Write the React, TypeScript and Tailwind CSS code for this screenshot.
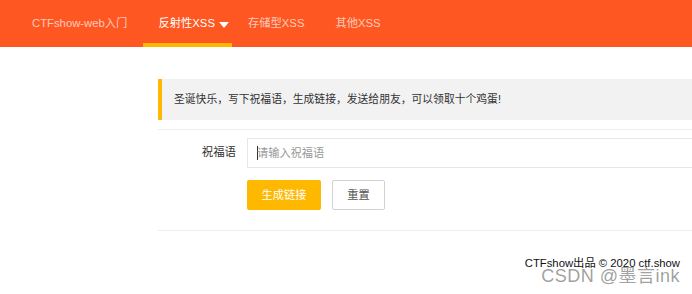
import React from "react";

export default function App() {
  const font = { fontFamily: '"Liberation Sans", Arial, "Noto Sans CJK SC", sans-serif' };
  return (
    <div className="relative w-[692px] h-[294px] overflow-hidden bg-white" style={font}>
      {/* Nav */}
      <div className="h-[47px] bg-[#FF5722] flex pl-[17px] gap-[1px]">
        <div className="relative px-[15px] h-full flex items-center text-[11.3px] text-white/70">CTFshow-web入门</div>
        <div className="relative pl-[15px] pr-[3px] h-full flex items-center text-[11.3px] text-white">
          反射性XSS
          <span className="ml-[4px] mt-[3px] w-0 h-0 border-l-[5px] border-r-[5px] border-t-[6px] border-l-transparent border-r-transparent border-t-white"></span>
          <span className="absolute left-0 right-0 bottom-0 h-[4px] bg-[#FFB800]"></span>
        </div>
        <div className="relative px-[15px] h-full flex items-center text-[11.3px] text-white/70">存储型XSS</div>
        <div className="relative px-[15px] h-full flex items-center text-[11.3px] text-white/70">其他XSS</div>
      </div>

      {/* Content */}
      <div className="ml-[158px] w-[600px] pt-[32px]">
        <div className="h-[41px] bg-[#f2f2f2] border-l-[4px] border-[#FFB800] flex items-center pl-[12px] text-[10.8px] text-[#333]">
          圣诞快乐，写下祝福语，生成链接，发送给朋友，可以领取十个鸡蛋!
        </div>
        <div className="mt-[9px] h-px bg-[#eeeeee]"></div>
        <div className="mt-[8px] flex items-center">
          <div className="w-[78px] text-right text-[11.4px] text-[#333]">祝福语</div>
          <div className="ml-[11px] flex-1 h-[30px] border border-[#e6e6e6] flex items-center pl-[9px] text-[11.2px] text-[#999]">
            <span className="w-px h-[14px] bg-[#333] mr-[-1px]"></span>
            请输入祝福语
          </div>
        </div>
        <div className="mt-[12px] ml-[89px] flex gap-[11px]">
          <div className="w-[74px] h-[30px] bg-[#FFB800] rounded-[2px] text-white text-[11.2px] flex items-center justify-center">生成链接</div>
          <div className="w-[53px] h-[30px] border border-[#d2d2d2] rounded-[2px] text-[#555] text-[11.2px] flex items-center justify-center">重置</div>
        </div>
        <div className="mt-[20px] h-px bg-[#eeeeee]"></div>
      </div>

      {/* Footer */}
      <div className="absolute top-[256px] right-[12px] text-[11.3px] text-[#111] leading-[14px]">CTFshow出品 © 2020 ctf.show</div>
      <div className="absolute top-[266px] right-[12px] text-[18px] text-[#888]/80 leading-[20px] tracking-[0.5px]">CSDN @墨言ink</div>
    </div>
  );
}
